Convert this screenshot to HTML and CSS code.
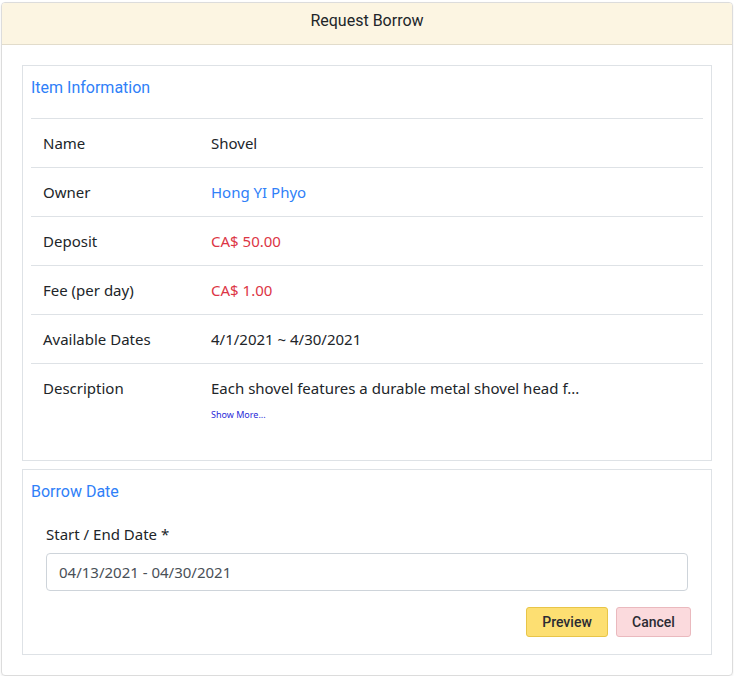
FILE: index.html
```html
<!DOCTYPE html>
<html lang="en">
<head>
<meta charset="utf-8">
<title>Request Borrow</title>
<link rel="stylesheet" href="styles.css">
</head>
<body>
<div class="card">
  <div class="card-header">Request Borrow</div>
  <div class="card-body">
    <section class="panel">
      <h5 class="panel-title">Item Information</h5>
      <table class="info">
        <colgroup><col class="col-lbl"><col></colgroup>
        <tr><td>Name</td><td>Shovel</td></tr>
        <tr><td>Owner</td><td class="link">Hong YI Phyo</td></tr>
        <tr><td>Deposit</td><td class="money">CA$ 50.00</td></tr>
        <tr><td>Fee (per day)</td><td class="money">CA$ 1.00</td></tr>
        <tr><td>Available Dates</td><td>4/1/2021 ~ 4/30/2021</td></tr>
        <tr><td>Description</td><td><div>Each shovel features a durable metal shovel head f...</div><a class="more" href="#">Show More...</a></td></tr>
      </table>
    </section>
    <section class="panel">
      <h5 class="panel-title">Borrow Date</h5>
      <div class="form-group">
        <label class="form-label">Start / End Date *</label>
        <div class="input">04/13/2021 - 04/30/2021</div>
      </div>
      <div class="actions">
        <button class="btn btn-preview">Preview</button>
        <button class="btn btn-cancel">Cancel</button>
      </div>
    </section>
  </div>
</div>
</body>
</html>
```
FILE: styles.css
```css
html, body { margin: 0; padding: 0; background: #fff; }
body {
  padding: 2px 1px 0 1px;
  font-family: "Noto Sans", "Open Sans", sans-serif;
  font-size: 15px;
  color: #212529;
}
.card {
  border: 1px solid #dcdcdc;
  border-radius: 4px;
  box-shadow: 0 1px 2px rgba(0,0,0,0.08);
  overflow: hidden;
}
.card-header {
  background: #fcf5e2;
  border-bottom: 1px solid #e2dccb;
  height: 35px;
  padding-top: 6px;
  line-height: 24px;
  text-align: center;
  font-family: Roboto, sans-serif;
  font-size: 16px;
  color: #212529;
}
.card-body {
  padding: 20px;
  display: flex;
  flex-direction: column;
  gap: 8px;
}
.panel {
  border: 1px solid #dee2e6;
  padding: 10px 8px 8px 8px;
}
.panel-title {
  margin: 0 0 18px 0;
  font-family: Roboto, sans-serif;
  font-weight: 400;
  font-size: 16px;
  line-height: 24px;
  color: #2f80f8;
}
.info {
  width: 100%;
  border-collapse: collapse;
  table-layout: fixed;
  margin-bottom: 17px;
}
.col-lbl { width: 168px; }
.info td {
  border-top: 1px solid #dee2e6;
  padding: 12px;
  line-height: 24px;
  vertical-align: top;
}
.link { color: #2f80f8; }
.money { color: #dc3545; }
.more {
  display: block;
  font-size: 9px;
  line-height: 16px;
  margin-top: 7px;
  color: #2a2ad8;
  text-decoration: none;
}
.form-group { padding: 0 15px; }
.form-label {
  display: block;
  line-height: 24px;
  margin-bottom: 7px;
}
.input {
  height: 36px;
  border: 1px solid #ced4da;
  border-radius: 4px;
  padding: 0 12px;
  display: flex;
  align-items: center;
  color: #495057;
}
.actions {
  display: flex;
  justify-content: flex-end;
  gap: 8px;
  padding: 16px 12px 9px 0;
}
.btn {
  font-family: Roboto, sans-serif;
  font-size: 14px;
  font-weight: 500;
  height: 30px;
  padding: 0 10px;
  border-radius: 3px;
  color: #2b2b33;
}
.btn-preview { background: #fddf72; border: 1px solid #e8c548; width: 82px; }
.btn-cancel { background: #fbdadd; border: 1px solid #eab9be; width: 75px; }
```
